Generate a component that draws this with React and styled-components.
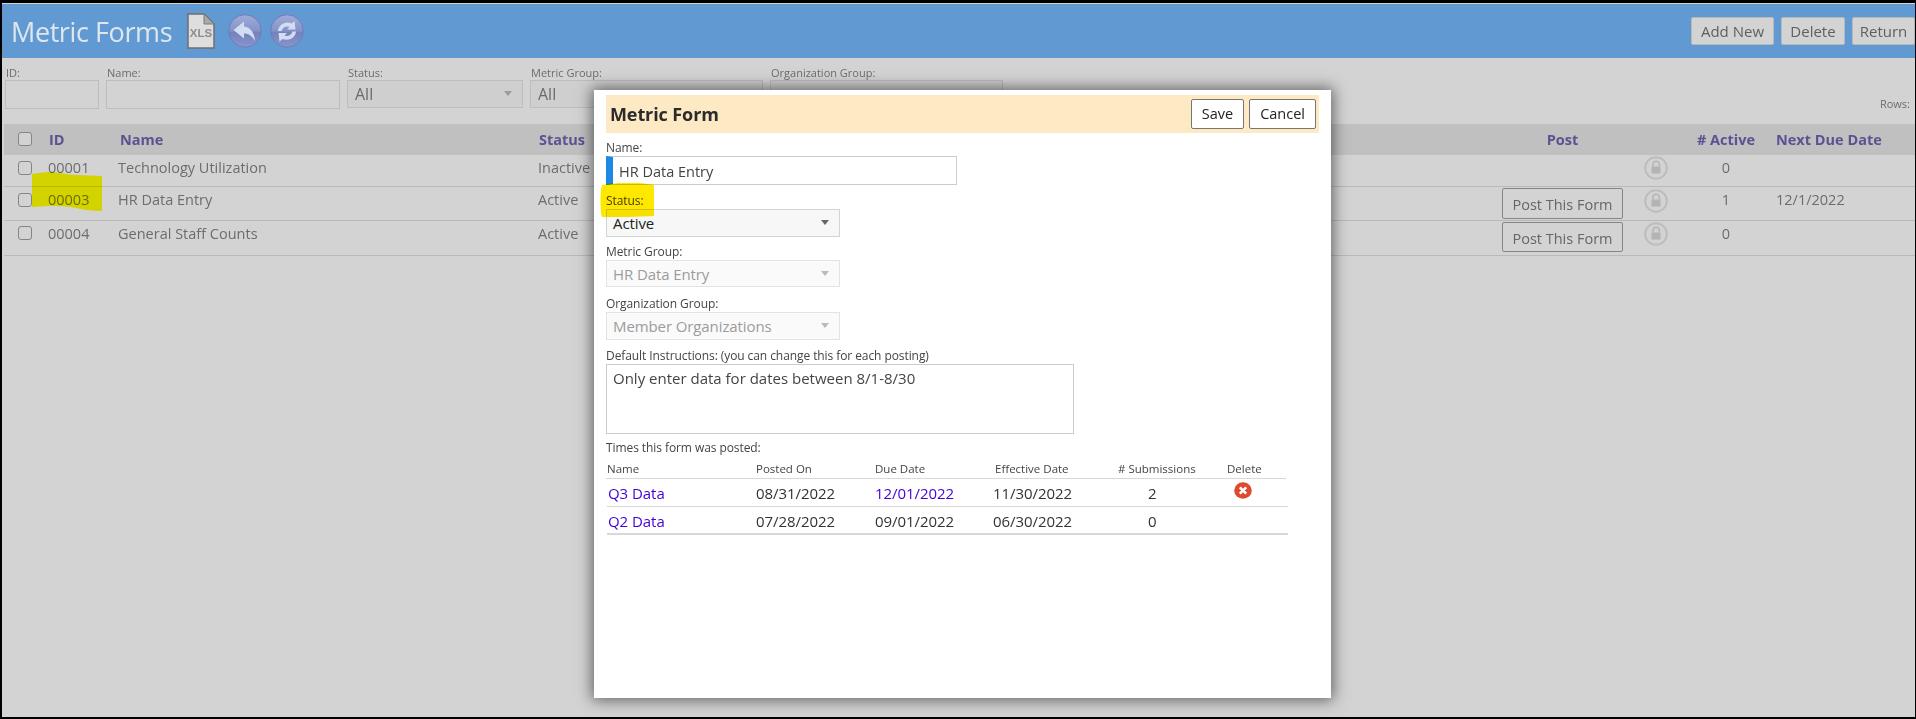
import React from "react";
import styled, { createGlobalStyle } from "styled-components";

const Global = createGlobalStyle`
  html, body { margin: 0; padding: 0; overflow: hidden; background: #000; }
  * { box-sizing: border-box; }
  body { font-family: "Open Sans", "Noto Sans", sans-serif; }
`;

const forms = [
  { id: "00001", name: "Technology Utilization", status: "Inactive", post: false, active: 0, due: "", h: 32, check: 6, text: 3, lock: 1, btn: 0, btnH: 30 },
  { id: "00003", name: "HR Data Entry", status: "Active", post: true, active: 1, due: "12/1/2022", h: 34, check: 6, text: 3, lock: 2, btn: 1, btnH: 31 },
  { id: "00004", name: "General Staff Counts", status: "Active", post: true, active: 0, due: "", h: 35, check: 5, text: 3, lock: 1, btn: 1, btnH: 30 },
];

const postings = [
  { name: "Q3 Data", posted: "08/31/2022", due: "12/01/2022", dueLink: true, effective: "11/30/2022", count: 2, del: true },
  { name: "Q2 Data", posted: "07/28/2022", due: "09/01/2022", effective: "06/30/2022", count: 0 },
];

const XlsIcon = () => (
  <HeadIcon $gap={13} width="28" height="36" viewBox="0 0 28 36">
    <path d="M1 1H17L27 11V35H1Z" fill="#dedede" stroke="#6f6f6f" strokeWidth="1.5" />
    <path d="M17 1V11H27Z" fill="#a9a9a9" stroke="#7a7a7a" strokeWidth="1" />
    <text x="14" y="24" textAnchor="middle" fontSize="11.5" fontWeight="700" fill="#8e8e8e" fontFamily="Liberation Sans, sans-serif">XLS</text>
  </HeadIcon>
);

const RoundIcon = ({ children, id }) => (
  <HeadIcon $gap={8} width="34" height="34" viewBox="0 0 34 34">
    <defs>
      <linearGradient id={id} x1="0" y1="0" x2="0" y2="1">
        <stop offset="0" stopColor="#a0acd8" />
        <stop offset="0.5" stopColor="#8492c8" />
        <stop offset="0.54" stopColor="#7382bc" />
        <stop offset="1" stopColor="#8895d0" />
      </linearGradient>
    </defs>
    <circle cx="17" cy="17" r="16.3" fill={`url(#${id})`} stroke="#6f7cb6" strokeWidth="1" />
    {children}
  </HeadIcon>
);

const LockIcon = () => (
  <svg width="24" height="24" viewBox="0 0 24 24">
    <circle cx="12" cy="12" r="10.8" fill="none" stroke="#bdbdbd" strokeWidth="2" />
    <path d="M9 10.5V8.5a3.2 3.2 0 0 1 6.4 0V10.5" fill="none" stroke="#b4b4b4" strokeWidth="1.5" />
    <rect x="7.5" y="10.5" width="9" height="7" fill="#b4b4b4" />
  </svg>
);

const DeleteIcon = () => (
  <svg width="18" height="17" viewBox="0 0 18 17">
    <ellipse cx="9" cy="8.5" rx="8.8" ry="8.3" fill="#e0492f" />
    <path d="M5.8 5.3L12.2 11.7M12.2 5.3L5.8 11.7" stroke="#fff" strokeWidth="2.6" />
  </svg>
);

const Field = ({ label, children, width, gap }) => (
  <FieldBox $width={width} $gap={gap}>
    <FieldLabel>{label}</FieldLabel>
    {children}
  </FieldBox>
);

const App = () => {
  return (
    <Frame>
      <Global />
      <Header>
        <Title>Metric Forms</Title>
        <XlsIcon />
        <RoundIcon id="backGrad">
          <path d="M5.5 16L16 7.5V12.5C22.5 13 26.5 19 27 27C24 22 21 19.5 16 19.5V24.5Z" fill="#d3dcf0" />
        </RoundIcon>
        <RoundIcon id="refreshGrad">
          <path d="M8 17C8.5 11 15 6.5 21.5 9.5L24.5 7L25.5 15.5H17L19.5 13C16 11.5 12.5 13.5 11.5 17Z" fill="#d3dcf0" />
          <path d="M26 17.5C25.5 23.5 19 27.5 12.5 25L9.5 27.5L8.5 19H17L14.5 21.5C18 23 21.5 21 22.5 17.5Z" fill="#d3dcf0" />
        </RoundIcon>
        <HeaderActions>
          <HeadButton $width={83}>Add New</HeadButton>
          <HeadButton $width={64}>Delete</HeadButton>
          <HeadButton $width={63}>Return</HeadButton>
        </HeaderActions>
      </Header>

      <Filters>
        <FilterField $width={94}>
          <FilterLabel>ID:</FilterLabel>
          <FilterInput readOnly />
        </FilterField>
        <FilterField $width={234}>
          <FilterLabel>Name:</FilterLabel>
          <FilterInput readOnly />
        </FilterField>
        <FilterField $width={176}>
          <FilterLabel>Status:</FilterLabel>
          <FilterSelect>All<Caret $color="#9b9b9b" /></FilterSelect>
        </FilterField>
        <FilterField $width={233}>
          <FilterLabel>Metric Group:</FilterLabel>
          <FilterSelect>All</FilterSelect>
        </FilterField>
        <FilterField $width={233}>
          <FilterLabel>Organization Group:</FilterLabel>
          <FilterSelect />
        </FilterField>
        <RowsLabel>Rows:</RowsLabel>
      </Filters>

      <TableHead>
        <Check type="checkbox" readOnly />
        <HeadCell $indent={1}>ID</HeadCell>
        <HeadCell $indent={2}>Name</HeadCell>
        <HeadCell $indent={1}>Status</HeadCell>
        <HeadCell $center>Post</HeadCell>
        <span />
        <HeadCell $center># Active</HeadCell>
        <HeadCell>Next Due Date</HeadCell>
      </TableHead>
      {forms.map((f) => (
        <Row key={f.id} $h={f.h}>
          <Check type="checkbox" readOnly $top={f.check} />
          <Cell $top={f.text}>{f.id}</Cell>
          <Cell $top={f.text}>{f.name}</Cell>
          <Cell $top={f.text}>{f.status}</Cell>
          <span>{f.post && <PostButton $top={f.btn} $h={f.btnH}>Post This Form</PostButton>}</span>
          <LockCell $top={f.lock}><LockIcon /></LockCell>
          <Cell $top={f.text} $center>{f.active}</Cell>
          <Cell $top={f.text}>{f.due}</Cell>
        </Row>
      ))}

      <RowMark width="70" height="39" viewBox="0 0 70 39">
        <path d="M0 2C6 1 12 0 17 0C28 0 34 3 44 3C54 3 62 4 70 4V39C60 39 52 38 44 36C34 34 26 34 17 34C11 34 6 35 0 35Z" fill="#ffff00" />
      </RowMark>

      <Modal>
        <ModalHead>
          <ModalTitle>Metric Form</ModalTitle>
          <ModalButton>Save</ModalButton>
          <ModalButton>Cancel</ModalButton>
        </ModalHead>

        <Field label="Name:" width={351} gap={7}>
          <NameInput readOnly value="HR Data Entry" />
        </Field>
        <Field label="Status:" width={234} gap={6}>
          <Select $h={28}>Active<Caret $color="#666" /></Select>
        </Field>
        <Field label="Metric Group:" width={234} gap={8}>
          <Select $h={27} $disabled>HR Data Entry<Caret $color="#bbb" /></Select>
        </Field>
        <Field label="Organization Group:" width={234} gap={7}>
          <Select $h={28} $disabled>Member Organizations<Caret $color="#bbb" /></Select>
        </Field>
        <Field label="Default Instructions: (you can change this for each posting)" width={468} gap={7}>
          <Notes readOnly value="Only enter data for dates between 8/1-8/30" />
        </Field>

        <TimesLabel>Times this form was posted:</TimesLabel>
        <PostHead>
          <span>Name</span>
          <span>Posted On</span>
          <span>Due Date</span>
          <EffectiveHead>Effective Date</EffectiveHead>
          <SubHead># Submissions</SubHead>
          <DeleteHead>Delete</DeleteHead>
        </PostHead>
        {postings.map((p, i) => (
          <PostRow key={p.name} $last={i === postings.length - 1}>
            <PostName>{p.name}</PostName>
            <span>{p.posted}</span>
            {p.dueLink ? <PostLink>{p.due}</PostLink> : <span>{p.due}</span>}
            <span>{p.effective}</span>
            <SubCount>{p.count}</SubCount>
            <DeleteCell>{p.del && <DeleteIcon />}</DeleteCell>
          </PostRow>
        ))}

        <StatusMark width="54" height="34" viewBox="0 0 54 34">
          <path d="M2 2C14 0 28 -1 40 0C46 1 50 1 54 2V33C40 34 14 34 2 34C0 30 0 6 2 2Z" fill="#ffe800" />
        </StatusMark>
      </Modal>
    </Frame>
  );
};

export default App;

const Frame = styled.div`
  position: relative;
  width: 1916px;
  height: 719px;
  overflow: hidden;
  background: #d3d3d3;
  border-style: solid;
  border-color: #000;
  border-width: 3px 1px 2px 2px;
`;

const Header = styled.header`
  display: flex;
  align-items: center;
  height: 55px;
  border-top: 1px solid #d3d3d3;
  background: #619ad3;
  padding-left: 9px;
`;

const Title = styled.h1`
  margin: 0 15px 0 0;
  font-size: 27px;
  font-weight: 400;
  letter-spacing: -0.4px;
  color: #dfe6ee;
  white-space: nowrap;
`;

const HeadIcon = styled.svg`
  flex: none;
  margin-right: ${(p) => p.$gap}px;
`;

const HeaderActions = styled.div`
  display: flex;
  gap: 7px;
  margin-left: auto;
`;

const HeadButton = styled.div`
  width: ${(p) => p.$width}px;
  height: 28px;
  line-height: 27px;
  text-align: center;
  font-size: 15px;
  color: #5f5f5f;
  background: #d3d3d3;
  border: 1px solid #b9b9b9;
  border-radius: 2px;
`;

const Filters = styled.div`
  display: flex;
  gap: 7px;
  height: 66px;
  padding: 7px 5px 0 3px;
`;

const FilterField = styled.div`
  width: ${(p) => p.$width}px;
`;

const FilterLabel = styled.div`
  height: 15px;
  padding-left: 1px;
  font-size: 11px;
  line-height: 15px;
  color: #6c6c6c;
`;

const FilterInput = styled.input`
  display: block;
  width: 100%;
  height: 29px;
  background: #d3d3d3;
  border: 1px solid #bdbdbd;
  outline: none;
`;

const FilterSelect = styled.div`
  position: relative;
  height: 28px;
  padding-left: 7px;
  font-size: 16px;
  line-height: 27px;
  color: #6a6a6a;
  background: #cfcfcf;
  border: 1px solid #bdbdbd;
`;

const Caret = styled.i`
  position: absolute;
  top: 10px;
  right: 10px;
  width: 0;
  height: 0;
  border-style: solid;
  border-width: 5px 4.5px 0;
  border-color: ${(p) => p.$color} transparent transparent;
`;

const RowsLabel = styled.div`
  align-self: flex-end;
  margin: 0 0 13px auto;
  font-size: 11px;
  color: #6c6c6c;
`;

const columns = "44px 70px 420px 964px 121px 53px 100px 1fr";

const TableHead = styled.div`
  display: grid;
  grid-template-columns: ${columns};
  align-items: center;
  height: 31px;
  margin-left: 2px;
  padding-bottom: 1px;
  background: #c0c0c0;
`;

const HeadCell = styled.div`
  padding-left: ${(p) => p.$indent || 0}px;
  text-align: ${(p) => (p.$center ? "center" : "left")};
  font-size: 14.5px;
  font-weight: 700;
  color: #5d5192;
  white-space: nowrap;
`;

const Check = styled.input`
  appearance: none;
  width: 14px;
  height: 14px;
  margin: ${(p) => p.$top || 0}px 0 0 14px;
  background: #d3d3d3;
  border: 1px solid #858585;
  border-radius: 3px;
`;

const Row = styled.div`
  display: grid;
  grid-template-columns: ${columns};
  align-items: start;
  height: ${(p) => p.$h}px;
  margin-left: 2px;
  border-bottom: 1px solid #b9b9b9;
`;

const Cell = styled.div`
  padding-top: ${(p) => p.$top}px;
  text-align: ${(p) => (p.$center ? "center" : "left")};
  font-size: 14.5px;
  line-height: 20px;
  color: #6d6d6d;
  white-space: nowrap;
`;

const PostButton = styled.div`
  height: ${(p) => p.$h}px;
  margin-top: ${(p) => p.$top}px;
  line-height: 31px;
  text-align: center;
  font-size: 14.5px;
  color: #666;
  border: 1px solid #858585;
  border-radius: 2px;
  white-space: nowrap;
`;

const LockCell = styled.div`
  display: flex;
  padding-left: 21px;
  margin-top: ${(p) => p.$top}px;
`;

const RowMark = styled.svg`
  position: absolute;
  left: 30px;
  top: 169px;
  mix-blend-mode: multiply;
  pointer-events: none;
`;

const Modal = styled.section`
  position: absolute;
  left: 592px;
  top: 87px;
  width: 737px;
  height: 608px;
  padding: 5px 12px;
  background: #fff;
  box-shadow: 0 0 14px 2px rgba(0, 0, 0, 0.55);
  color: #333;
`;

const ModalHead = styled.div`
  display: flex;
  align-items: center;
  gap: 5px;
  height: 38px;
  margin-bottom: 6px;
  padding: 0 3px 0 4px;
  background: #fee9c5;
`;

const ModalTitle = styled.h2`
  flex: 1;
  margin: 0;
  font-size: 18px;
  font-weight: 700;
  letter-spacing: -0.1px;
  color: #2b2b2b;
`;

const ModalButton = styled.div`
  height: 30px;
  padding: 0 10px;
  line-height: 28px;
  font-size: 14.5px;
  color: #222;
  background: #fff;
  border: 1px solid #767676;
  border-radius: 2px;
`;

const FieldBox = styled.div`
  width: ${(p) => p.$width}px;
  margin-bottom: ${(p) => p.$gap}px;
`;

const FieldLabel = styled.div`
  height: 17px;
  font-size: 12px;
  line-height: 17px;
  letter-spacing: -0.08px;
  color: #444;
  white-space: nowrap;
`;

const NameInput = styled.input`
  display: block;
  width: 100%;
  height: 29px;
  padding: 2px 0 0 6px;
  border: 1px solid #ccc;
  border-left: 7px solid #1e88e5;
  outline: none;
  font: inherit;
  font-size: 14.5px;
  color: #444;
`;

const Select = styled.div`
  position: relative;
  height: ${(p) => p.$h}px;
  padding-left: 6px;
  font-size: 15px;
  line-height: 27px;
  letter-spacing: -0.1px;
  color: ${(p) => (p.$disabled ? "#9c9c9c" : "#222")};
  background: ${(p) => (p.$disabled ? "#fafafa" : "#f7f7f7")};
  border: 1px solid ${(p) => (p.$disabled ? "#e3e3e3" : "#d4d4d4")};
`;

const Notes = styled.textarea`
  display: block;
  width: 100%;
  height: 70px;
  padding: 3px 6px;
  resize: none;
  border: 1px solid #ccc;
  outline: none;
  font: inherit;
  font-size: 15px;
  line-height: 20px;
  color: #444;
`;

const TimesLabel = styled.div`
  height: 18px;
  font-size: 12px;
  line-height: 14px;
  letter-spacing: -0.08px;
  color: #444;
`;

const postColumns = "149px 119px 118px 118px 110px 1fr";

const PostHead = styled.div`
  display: grid;
  grid-template-columns: ${postColumns};
  align-items: center;
  width: 680px;
  height: 20px;
  padding-left: 1px;
  border-bottom: 1px solid #d8d8d8;
  font-size: 11.5px;
  line-height: 16px;
  color: #444;
`;

const EffectiveHead = styled.span`
  padding-left: 2px;
`;

const SubHead = styled.span`
  padding-left: 7px;
  white-space: nowrap;
`;

const DeleteHead = styled.span`
  padding-left: 6px;
`;

const PostRow = styled.div`
  display: grid;
  grid-template-columns: ${postColumns};
  align-items: center;
  width: 681px;
  height: 28px;
  margin-left: 1px;
  padding-top: 1px;
  font-size: 15px;
  letter-spacing: -0.05px;
  color: #333;
  border-bottom: ${(p) => (p.$last ? "2px" : "1px")} solid #d8d8d8;
  white-space: nowrap;
`;

const PostLink = styled.a`
  color: #4200d8;
  cursor: pointer;
`;

const PostName = styled(PostLink)`
  padding-left: 1px;
`;

const SubCount = styled.span`
  padding-left: 37px;
`;

const DeleteCell = styled.span`
  display: flex;
  padding-left: 13px;
  margin-top: -6px;
`;

const StatusMark = styled.svg`
  position: absolute;
  left: 6px;
  top: 93px;
  mix-blend-mode: multiply;
  pointer-events: none;
`;
